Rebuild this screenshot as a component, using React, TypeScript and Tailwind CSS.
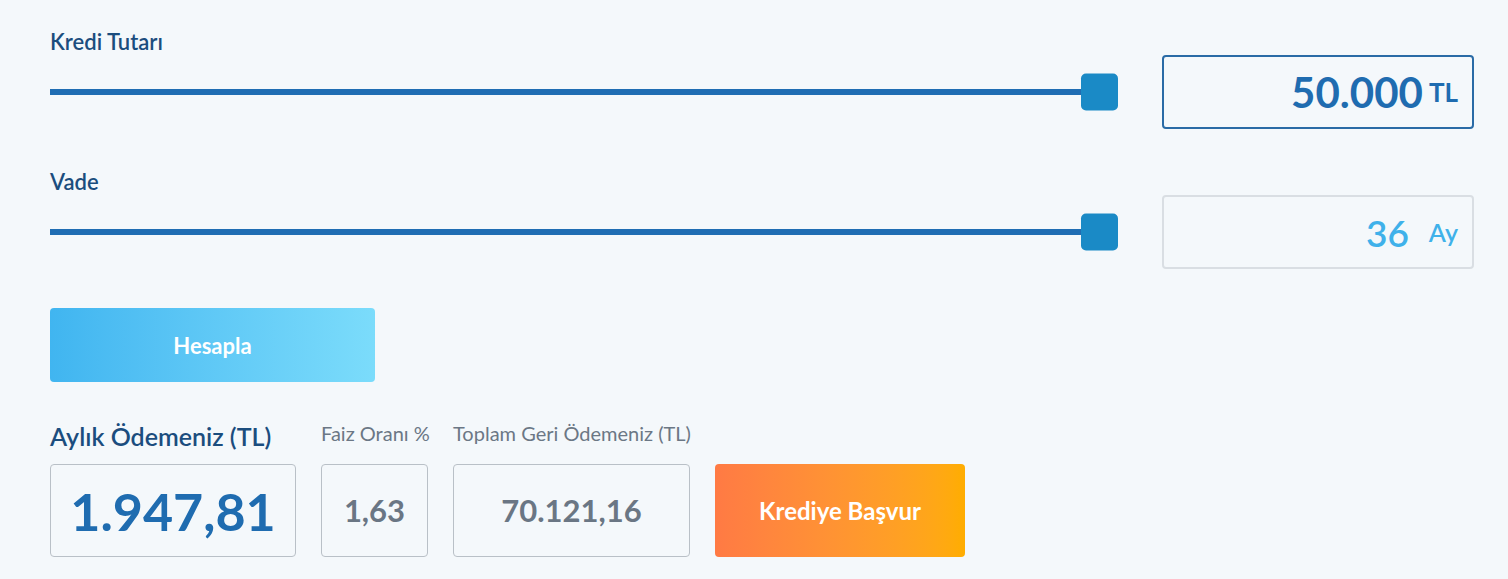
import React from "react";

const font = { fontFamily: "Lato, 'Noto Sans', sans-serif" };

const Slider = () => (
  <div className="relative flex h-[74px] items-center">
    <div className="h-[6px] w-full bg-[#1f6db3]" />
    <div className="absolute right-0 top-1/2 h-[37px] w-[37px] -translate-y-1/2 rounded-[5px] bg-[#1a8ac6]" />
  </div>
);

const App = () => {
  return (
    <div
      className="min-h-screen w-full bg-[#f4f8fb] pl-[50px] pr-[34px] pt-[28px]"
      style={font}
    >
      <div className="flex items-end gap-[44px]">
        <div className="flex-1">
          <p className="h-[27px] text-[22px] font-semibold leading-[27px] text-[#1b4d7e]">
            Kredi Tutarı
          </p>
          <Slider />
        </div>
        <div className="flex h-[74px] w-[312px] items-center justify-end gap-[6px] rounded-[4px] border-2 border-[#2a6ba6] pr-[14px]">
          <span className="text-[42px] font-bold leading-none text-[#1f6cb0]">
            50.000
          </span>
          <span className="text-[26px] font-bold leading-none text-[#1f6cb0]">
            TL
          </span>
        </div>
      </div>

      <div className="mt-[39px] flex items-end gap-[44px]">
        <div className="flex-1">
          <p className="h-[27px] text-[22px] font-semibold leading-[27px] text-[#1b4d7e]">
            Vade
          </p>
          <Slider />
        </div>
        <div className="flex h-[74px] w-[312px] items-center justify-end gap-[20px] rounded-[4px] border-2 border-[#d9dee3] pr-[14px]">
          <span className="text-[37px] font-semibold leading-none text-[#3fb1ea]">
            36
          </span>
          <span className="text-[25px] font-semibold leading-none text-[#3fb1ea]">
            Ay
          </span>
        </div>
      </div>

      <button className="mt-[39px] flex h-[74px] w-[325px] items-center justify-center rounded-[4px] bg-gradient-to-r from-[#40b5f0] to-[#7bdcfb] text-[22px] font-bold text-white">
        Hesapla
      </button>

      <div className="mt-[38px] flex items-end gap-[25px]">
        <div className="w-[246px]">
          <p className="h-[44px] whitespace-nowrap text-[25px] font-semibold leading-[32px] text-[#1b4d7e]">
            Aylık Ödemeniz (TL)
          </p>
          <div className="flex h-[93px] items-center justify-center rounded-[4px] border border-[#b9c0c7]">
            <span className="text-[52px] font-bold leading-none text-[#1f6cb0]">
              1.947,81
            </span>
          </div>
        </div>
        <div className="w-[107px]">
          <p className="h-[44px] whitespace-nowrap text-[20px] leading-[26px] text-[#6b7785]">
            Faiz Oranı %
          </p>
          <div className="flex h-[93px] items-center justify-center rounded-[4px] border border-[#b9c0c7]">
            <span className="text-[31px] font-bold leading-none text-[#6a7684]">
              1,63
            </span>
          </div>
        </div>
        <div className="w-[237px]">
          <p className="h-[44px] whitespace-nowrap text-[20px] leading-[26px] text-[#6b7785]">
            Toplam Geri Ödemeniz (TL)
          </p>
          <div className="flex h-[93px] items-center justify-center rounded-[4px] border border-[#b9c0c7]">
            <span className="text-[31px] font-bold leading-none text-[#6a7684]">
              70.121,16
            </span>
          </div>
        </div>
        <button className="flex h-[93px] w-[250px] items-center justify-center rounded-[4px] bg-gradient-to-r from-[#ff7a44] to-[#ffad00] text-[24px] font-bold text-white">
          Krediye Başvur
        </button>
      </div>
    </div>
  );
};

export default App;
